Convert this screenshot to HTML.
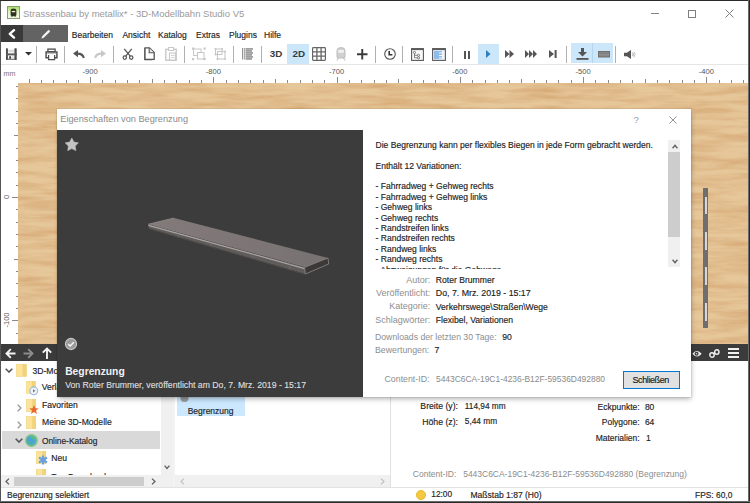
<!DOCTYPE html>
<html><head><meta charset="utf-8"><style>
html,body{margin:0;padding:0;}
body{width:750px;height:503px;position:relative;overflow:hidden;background:#fff;font-family:"Liberation Sans",sans-serif;}
.r{position:absolute;display:block;}
.t{position:absolute;white-space:pre;-webkit-text-stroke:0.15px currentColor;}
</style></head><body>
<div class="r" style="left:0px;top:0px;width:750px;height:503px;background:#ffffff;"></div>
<svg class="r" style="left:7px;top:6px;" width="13" height="13" viewBox="0 0 13 13"><defs><linearGradient id="lg" x1="0" y1="0" x2="0" y2="1"><stop offset="0" stop-color="#9edb58"/><stop offset="0.45" stop-color="#e2f4c4"/><stop offset="1" stop-color="#f6fbea"/></linearGradient></defs><rect x="0.5" y="0.5" width="12" height="12" fill="url(#lg)" stroke="#8c9c74" stroke-width="1"/><path d="M3.6 4.8 Q3.6 2.6 6.5 2.6 Q9.4 2.6 9.4 4.8 V9.2 L8.3 10.3 H4.7 L3.6 9.2 Z" fill="#2e3322"/><path d="M4.6 5.2 Q6.5 4.2 8.4 5.2 V5.9 Q6.5 6.6 4.6 5.9 Z" fill="#f2efd0"/><path d="M4.2 11.2 L5.2 10.1 M8.8 11.2 L7.8 10.1" stroke="#3a3f2c" stroke-width="0.9"/></svg>
<div class="t" style="left:23px;top:7.81px;font-size:9.5px;line-height:11.4px;color:#9a9a9a;-webkit-text-stroke:0;">Strassenbau by metallix* - 3D-Modellbahn Studio V5</div>
<div class="r" style="left:651px;top:12.5px;width:8px;height:1px;background:#808080;"></div>
<div class="r" style="left:688px;top:9.5px;width:8px;height:8px;background:none;border:1px solid #808080;box-sizing:border-box;"></div>
<svg class="r" style="left:725px;top:9px;" width="9" height="9" viewBox="0 0 9 9"><path d="M0.5 0.5 L8.5 8.5 M8.5 0.5 L0.5 8.5" stroke="#808080" stroke-width="1"/></svg>
<div class="r" style="left:1px;top:25px;width:22px;height:17px;background:#3a3a3a;"></div>
<div class="r" style="left:23px;top:25px;width:45px;height:17px;background:#636363;"></div>
<svg class="r" style="left:7.5px;top:29px;" width="8" height="10" viewBox="0 0 8 10"><path d="M6 1.2 L1.8 4.8 L6 8.6" stroke="#fff" stroke-width="2.4" fill="none" stroke-linejoin="round" stroke-linecap="round"/></svg>
<svg class="r" style="left:40px;top:28px;" width="12" height="12" viewBox="0 0 12 12"><path d="M1.8 10.2 L2.4 8 L8.6 1.8 L10.2 3.4 L4 9.6 Z" fill="#f4f4f4"/><path d="M1.4 10.6 L2.2 8.2 L3.8 9.8 Z" fill="#f4f4f4"/></svg>
<div class="t" style="left:71.8px;top:29.55px;font-size:8.5px;line-height:10.2px;color:#1e1e1e;">Bearbeiten</div>
<div class="t" style="left:122.4px;top:29.55px;font-size:8.5px;line-height:10.2px;color:#1e1e1e;">Ansicht</div>
<div class="t" style="left:158px;top:29.55px;font-size:8.5px;line-height:10.2px;color:#1e1e1e;">Katalog</div>
<div class="t" style="left:196px;top:29.55px;font-size:8.5px;line-height:10.2px;color:#1e1e1e;">Extras</div>
<div class="t" style="left:229px;top:29.55px;font-size:8.5px;line-height:10.2px;color:#1e1e1e;">Plugins</div>
<div class="t" style="left:264px;top:29.55px;font-size:8.5px;line-height:10.2px;color:#1e1e1e;">Hilfe</div>
<div class="r" style="left:1px;top:64px;width:747px;height:1px;background:#e6e6e6;"></div>
<svg class="r" style="left:6px;top:48px;" width="11" height="12" viewBox="0 0 11 12"><rect x="0" y="0.3" width="1.9" height="11.4" rx="0.6" fill="#4a4a4a"/><rect x="8.4" y="0.3" width="2.3" height="11.4" rx="0.6" fill="#4a4a4a"/><rect x="2.4" y="1.8" width="5.6" height="0.8" fill="#c4c4c4"/><rect x="2.4" y="3.4" width="5.6" height="0.8" fill="#c4c4c4"/><rect x="0" y="5.4" width="10.7" height="2" fill="#5a5a5a"/><rect x="0" y="10.7" width="10.7" height="1" fill="#4a4a4a"/><rect x="3.2" y="8.3" width="1.8" height="2.3" fill="#3a3a3a"/><rect x="5.5" y="8.3" width="2.4" height="2.5" fill="#dcdcdc"/></svg>
<svg class="r" style="left:25px;top:52px;" width="7" height="4" viewBox="0 0 7 4"><path d="M0 0 H7 L3.5 3.5 Z" fill="#333"/></svg>
<div class="r" style="left:36px;top:45.5px;width:1px;height:17px;background:#b0b0b0;"></div>
<div class="r" style="left:64px;top:45.5px;width:1px;height:17px;background:#b0b0b0;"></div>
<div class="r" style="left:113px;top:45.5px;width:1px;height:17px;background:#b0b0b0;"></div>
<div class="r" style="left:184px;top:45.5px;width:1px;height:17px;background:#b0b0b0;"></div>
<div class="r" style="left:233px;top:45.5px;width:1px;height:17px;background:#b0b0b0;"></div>
<div class="r" style="left:261px;top:45.5px;width:1px;height:17px;background:#b0b0b0;"></div>
<div class="r" style="left:375px;top:45.5px;width:1px;height:17px;background:#b0b0b0;"></div>
<div class="r" style="left:402px;top:45.5px;width:1px;height:17px;background:#b0b0b0;"></div>
<div class="r" style="left:452px;top:45.5px;width:1px;height:17px;background:#b0b0b0;"></div>
<div class="r" style="left:566px;top:45.5px;width:1px;height:17px;background:#b0b0b0;"></div>
<div class="r" style="left:615px;top:45.5px;width:1px;height:17px;background:#b0b0b0;"></div>
<svg class="r" style="left:44.5px;top:47.5px;" width="13" height="13" viewBox="0 0 13 13"><rect x="2.9" y="1.1" width="7.2" height="2.6" fill="none" stroke="#4e4e4e" stroke-width="1.3"/><path d="M3.2 9.8 H1.1 V4 H11.9 V9.8 H9.8" fill="none" stroke="#4e4e4e" stroke-width="1.5"/><rect x="1.8" y="4.8" width="9.4" height="1.2" fill="#bdbdbd"/><path d="M3.6 7 V11.6 H9.6 V7" fill="#fff" stroke="#4e4e4e" stroke-width="1.2"/></svg>
<svg class="r" style="left:73px;top:50px;" width="12" height="9" viewBox="0 0 12 9"><path d="M10.8 8 Q10 3.6 4.5 3.6" fill="none" stroke="#555" stroke-width="2.1"/><path d="M0 3.6 L5 0 V7.2 Z" fill="#555"/></svg>
<svg class="r" style="left:94px;top:50px;" width="12" height="9" viewBox="0 0 12 9"><path d="M1.2 8 Q2 3.6 7.5 3.6" fill="none" stroke="#c8c8c8" stroke-width="2.1"/><path d="M12 3.6 L7 0 V7.2 Z" fill="#c8c8c8"/></svg>
<svg class="r" style="left:122px;top:48px;" width="12" height="12" viewBox="0 0 12 12"><path d="M2.2 0.8 L8.3 8.2 M9.8 0.8 L3.7 8.2" stroke="#555" stroke-width="1.3"/><circle cx="2.8" cy="9.6" r="1.7" fill="#fff" stroke="#555" stroke-width="1.2"/><circle cx="9.2" cy="9.6" r="1.7" fill="#fff" stroke="#555" stroke-width="1.2"/></svg>
<svg class="r" style="left:143px;top:47px;" width="12" height="14" viewBox="0 0 12 14"><path d="M1.8 1 V12.8 H9.5" fill="none" stroke="#555" stroke-width="1.1"/><path d="M2 0.8 H6.5 L11.2 5.5 V12.4 H2 Z" fill="#fff" stroke="#555" stroke-width="1.3"/><path d="M6.2 1 V5.8 H11" fill="#e8e8e8" stroke="#555" stroke-width="1.1"/></svg>
<svg class="r" style="left:165px;top:47px;" width="12" height="14" viewBox="0 0 12 14"><rect x="0.8" y="2.3" width="10.4" height="10.9" fill="none" stroke="#c8c8c8" stroke-width="1.4"/><rect x="3.5" y="0.5" width="5" height="3" fill="#fff" stroke="#c8c8c8" stroke-width="1"/><rect x="4.5" y="6" width="6" height="7" fill="#fff" stroke="#c8c8c8" stroke-width="1.1"/><path d="M6 8.5 H9.5 M6 10.5 H9.5" stroke="#c8c8c8" stroke-width="0.8"/></svg>
<svg class="r" style="left:192px;top:47px;" width="14" height="14" viewBox="0 0 14 14"><rect x="1.5" y="2" width="7.5" height="6.5" fill="none" stroke="#c8c8c8" stroke-width="1"/><rect x="5.5" y="5.5" width="6.5" height="6.5" fill="#fff" stroke="#c8c8c8" stroke-width="1.1"/><rect x="0" y="0.5" width="2.2" height="2.2" fill="#c8c8c8"/><rect x="11.5" y="0.5" width="2.2" height="2.2" fill="#c8c8c8"/><rect x="0" y="11" width="2.2" height="2.2" fill="#c8c8c8"/><rect x="11.5" y="11" width="2.2" height="2.2" fill="#c8c8c8"/></svg>
<svg class="r" style="left:214px;top:47px;" width="13" height="14" viewBox="0 0 13 14"><rect x="1.5" y="2" width="6.5" height="5.5" fill="none" stroke="#c8c8c8" stroke-width="1"/><rect x="3.5" y="4.5" width="7.5" height="7.5" fill="none" stroke="#c8c8c8" stroke-width="1.1"/><circle cx="1.5" cy="2" r="1.1" fill="#c8c8c8"/><circle cx="8" cy="2" r="1.1" fill="#c8c8c8"/><circle cx="3.5" cy="12" r="1.1" fill="#c8c8c8"/><circle cx="11" cy="12" r="1.1" fill="#c8c8c8"/><circle cx="11" cy="4.5" r="1.1" fill="#c8c8c8"/><circle cx="1.5" cy="7.5" r="1.1" fill="#c8c8c8"/></svg>
<svg class="r" style="left:242px;top:48px;" width="11" height="12" viewBox="0 0 11 12"><rect x="0" y="0" width="0.9" height="11.5" fill="#888"/><rect x="1.8" y="0" width="0.9" height="11.5" fill="#888"/><rect x="3.5" y="0.3" width="7.5" height="1.3" fill="#7a7a7a"/><rect x="3.5" y="2.3" width="6.5" height="1.3" fill="#7a7a7a"/><rect x="3.5" y="4.3" width="7.5" height="1.3" fill="#7a7a7a"/><rect x="3.5" y="6.3" width="6.5" height="1.3" fill="#7a7a7a"/><rect x="3.5" y="8.3" width="7.5" height="1.3" fill="#7a7a7a"/><rect x="3.5" y="10.3" width="6.5" height="1.3" fill="#7a7a7a"/></svg>
<div class="t" style="left:269.8px;top:47.92px;font-size:9.8px;line-height:11.76px;color:#3a3a3a;font-weight:bold;-webkit-text-stroke:0;">3D</div>
<div class="r" style="left:287px;top:43.5px;width:21.5px;height:20px;background:#cce6fa;"></div>
<div class="t" style="left:292.5px;top:47.92px;font-size:9.8px;line-height:11.76px;color:#2e3e4e;font-weight:bold;-webkit-text-stroke:0;">2D</div>
<svg class="r" style="left:312px;top:47px;" width="14" height="14" viewBox="0 0 14 14"><rect x="0.6" y="0.6" width="12.8" height="12.8" rx="0.8" fill="none" stroke="#666" stroke-width="1.2"/><path d="M4.9 0.6 V13.4 M9.1 0.6 V13.4 M0.6 4.9 H13.4 M0.6 9.1 H13.4" stroke="#666" stroke-width="1.3"/></svg>
<svg class="r" style="left:336px;top:47px;" width="10" height="14" viewBox="0 0 10 14"><path d="M1 3.5 Q1 0.6 5 0.6 Q9 0.6 9 3.5 V10 Q9 11 8 11 H2 Q1 11 1 10 Z" fill="#d0d0d0" stroke="#bdbdbd" stroke-width="1"/><rect x="2.2" y="3" width="5.6" height="2.8" fill="#f2f2f2"/><path d="M2.5 11 L0.8 13.5 M7.5 11 L9.2 13.5" stroke="#c4c4c4" stroke-width="1.1"/></svg>
<svg class="r" style="left:357px;top:49px;" width="10.5" height="10.5" viewBox="0 0 10.5 10.5"><path d="M5.25 0 V10.5 M0 5.25 H10.5" stroke="#3a3a3a" stroke-width="1.9"/></svg>
<svg class="r" style="left:384px;top:48px;" width="12" height="12" viewBox="0 0 12 12"><circle cx="6" cy="6" r="5.3" fill="none" stroke="#555" stroke-width="1.1"/><path d="M5.2 3 V6.8 H8.4" fill="none" stroke="#333" stroke-width="1.6"/></svg>
<svg class="r" style="left:411px;top:48px;" width="13" height="13" viewBox="0 0 13 13"><rect x="0.6" y="0.6" width="11.8" height="11.8" fill="#fafafa" stroke="#5a5a5a" stroke-width="1.1"/><rect x="0.6" y="0.6" width="11.8" height="1.5" fill="#5a5a5a"/><circle cx="3.5" cy="4.5" r="1.1" fill="none" stroke="#666" stroke-width="0.8"/><path d="M3.5 5.6 V9.8 H6.5 M3.5 7.3 H6.5" fill="none" stroke="#666" stroke-width="0.8"/><circle cx="7.5" cy="7.3" r="1.1" fill="none" stroke="#666" stroke-width="0.8"/><circle cx="7.5" cy="9.8" r="1.1" fill="none" stroke="#666" stroke-width="0.8"/></svg>
<svg class="r" style="left:432px;top:48px;" width="14" height="13" viewBox="0 0 14 13"><rect x="0.6" y="0.6" width="12.8" height="11.8" fill="#eaf3fb" stroke="#5a5a5a" stroke-width="1.1"/><rect x="0.6" y="0.6" width="12.8" height="1.5" fill="#5a5a5a"/><rect x="2" y="3" width="8" height="8" fill="#8fbde8"/><rect x="7" y="4.5" width="4" height="0.9" fill="#fff"/><rect x="7" y="7" width="4" height="0.9" fill="#fff"/><rect x="7" y="9.5" width="4" height="0.9" fill="#fff"/></svg>
<div class="r" style="left:463.5px;top:50.5px;width:2px;height:8px;background:#555;"></div>
<div class="r" style="left:468px;top:50.5px;width:2px;height:8px;background:#555;"></div>
<div class="r" style="left:478px;top:43.5px;width:21px;height:20px;background:#cce6fa;"></div>
<svg class="r" style="left:486px;top:50px;" width="5" height="8" viewBox="0 0 5 8"><path d="M0 0 L4.5 4 L0 8 Z" fill="#2f7fc0"/></svg>
<svg class="r" style="left:505px;top:50px;" width="10" height="8" viewBox="0 0 10 8"><path d="M0 0 L4.5 4 L0 8 Z M4.5 0 L9 4 L4.5 8 Z" fill="#555"/></svg>
<svg class="r" style="left:525px;top:50px;" width="12" height="8" viewBox="0 0 12 8"><path d="M0 0 L4 4 L0 8 Z M4 0 L8 4 L4 8 Z M8 0 L12 4 L8 8 Z" fill="#555"/></svg>
<svg class="r" style="left:549px;top:50px;" width="8" height="8" viewBox="0 0 8 8"><path d="M0 0 L5 4 L0 8 Z" fill="#555"/><rect x="5.6" y="0" width="2" height="8" fill="#555"/></svg>
<div class="r" style="left:571px;top:43px;width:42px;height:20px;background:#cce6fa;"></div>
<div class="r" style="left:592px;top:43px;width:1px;height:20px;background:#b3d3ee;"></div>
<svg class="r" style="left:576px;top:48px;" width="13" height="12" viewBox="0 0 13 12"><path d="M5 0 H8 V4 H11 L6.5 8.5 L2 4 H5 Z" fill="#555"/><rect x="0.5" y="10" width="12" height="1.8" fill="#555"/></svg>
<svg class="r" style="left:597.5px;top:51px;" width="12" height="6.5" viewBox="0 0 12 6.5"><rect x="0" y="0" width="12" height="6.5" fill="#6e6e6e"/><rect x="0.8" y="1.4" width="10.4" height="0.9" fill="#9a9a9a"/><rect x="0.8" y="2.9" width="10.4" height="0.9" fill="#9a9a9a"/><rect x="0.8" y="4.4" width="10.4" height="0.9" fill="#9a9a9a"/></svg>
<svg class="r" style="left:624px;top:50px;" width="12" height="9" viewBox="0 0 12 9"><path d="M0 2.8 H2.8 L7 0 V9 L2.8 6.2 H0 Z" fill="#555"/><path d="M8.6 2.8 Q10 4.5 8.6 6.2" fill="none" stroke="#888" stroke-width="0.9"/><path d="M10 1.6 Q12 4.5 10 7.4" fill="none" stroke="#b0b0b0" stroke-width="0.8"/></svg>
<div class="t" style="left:3.5px;top:70.49px;font-size:7.2px;line-height:8.64px;color:#777;-webkit-text-stroke:0;">mm</div>
<div class="r" style="left:28.5px;top:78.5px;width:1px;height:4px;background:#8a8a8a;"></div>
<div class="r" style="left:40.8px;top:80.0px;width:1px;height:2.5px;background:#8a8a8a;"></div>
<div class="r" style="left:53.1px;top:80.0px;width:1px;height:2.5px;background:#8a8a8a;"></div>
<div class="r" style="left:65.5px;top:80.0px;width:1px;height:2.5px;background:#8a8a8a;"></div>
<div class="r" style="left:77.8px;top:80.0px;width:1px;height:2.5px;background:#8a8a8a;"></div>
<div class="r" style="left:90.1px;top:76.5px;width:1px;height:6px;background:#8a8a8a;"></div>
<div class="r" style="left:102.4px;top:80.0px;width:1px;height:2.5px;background:#8a8a8a;"></div>
<div class="r" style="left:114.7px;top:80.0px;width:1px;height:2.5px;background:#8a8a8a;"></div>
<div class="r" style="left:127.1px;top:80.0px;width:1px;height:2.5px;background:#8a8a8a;"></div>
<div class="r" style="left:139.4px;top:80.0px;width:1px;height:2.5px;background:#8a8a8a;"></div>
<div class="r" style="left:151.7px;top:78.5px;width:1px;height:4px;background:#8a8a8a;"></div>
<div class="r" style="left:164.0px;top:80.0px;width:1px;height:2.5px;background:#8a8a8a;"></div>
<div class="r" style="left:176.4px;top:80.0px;width:1px;height:2.5px;background:#8a8a8a;"></div>
<div class="r" style="left:188.7px;top:80.0px;width:1px;height:2.5px;background:#8a8a8a;"></div>
<div class="r" style="left:201.0px;top:80.0px;width:1px;height:2.5px;background:#8a8a8a;"></div>
<div class="r" style="left:213.3px;top:76.5px;width:1px;height:6px;background:#8a8a8a;"></div>
<div class="r" style="left:225.7px;top:80.0px;width:1px;height:2.5px;background:#8a8a8a;"></div>
<div class="r" style="left:238.0px;top:80.0px;width:1px;height:2.5px;background:#8a8a8a;"></div>
<div class="r" style="left:250.3px;top:80.0px;width:1px;height:2.5px;background:#8a8a8a;"></div>
<div class="r" style="left:262.6px;top:80.0px;width:1px;height:2.5px;background:#8a8a8a;"></div>
<div class="r" style="left:275.0px;top:78.5px;width:1px;height:4px;background:#8a8a8a;"></div>
<div class="r" style="left:287.3px;top:80.0px;width:1px;height:2.5px;background:#8a8a8a;"></div>
<div class="r" style="left:299.6px;top:80.0px;width:1px;height:2.5px;background:#8a8a8a;"></div>
<div class="r" style="left:311.9px;top:80.0px;width:1px;height:2.5px;background:#8a8a8a;"></div>
<div class="r" style="left:324.3px;top:80.0px;width:1px;height:2.5px;background:#8a8a8a;"></div>
<div class="r" style="left:336.6px;top:76.5px;width:1px;height:6px;background:#8a8a8a;"></div>
<div class="r" style="left:348.9px;top:80.0px;width:1px;height:2.5px;background:#8a8a8a;"></div>
<div class="r" style="left:361.2px;top:80.0px;width:1px;height:2.5px;background:#8a8a8a;"></div>
<div class="r" style="left:373.6px;top:80.0px;width:1px;height:2.5px;background:#8a8a8a;"></div>
<div class="r" style="left:385.9px;top:80.0px;width:1px;height:2.5px;background:#8a8a8a;"></div>
<div class="r" style="left:398.2px;top:78.5px;width:1px;height:4px;background:#8a8a8a;"></div>
<div class="r" style="left:410.5px;top:80.0px;width:1px;height:2.5px;background:#8a8a8a;"></div>
<div class="r" style="left:422.8px;top:80.0px;width:1px;height:2.5px;background:#8a8a8a;"></div>
<div class="r" style="left:435.2px;top:80.0px;width:1px;height:2.5px;background:#8a8a8a;"></div>
<div class="r" style="left:447.5px;top:80.0px;width:1px;height:2.5px;background:#8a8a8a;"></div>
<div class="r" style="left:459.8px;top:76.5px;width:1px;height:6px;background:#8a8a8a;"></div>
<div class="r" style="left:472.1px;top:80.0px;width:1px;height:2.5px;background:#8a8a8a;"></div>
<div class="r" style="left:484.5px;top:80.0px;width:1px;height:2.5px;background:#8a8a8a;"></div>
<div class="r" style="left:496.8px;top:80.0px;width:1px;height:2.5px;background:#8a8a8a;"></div>
<div class="r" style="left:509.1px;top:80.0px;width:1px;height:2.5px;background:#8a8a8a;"></div>
<div class="r" style="left:521.4px;top:78.5px;width:1px;height:4px;background:#8a8a8a;"></div>
<div class="r" style="left:533.8px;top:80.0px;width:1px;height:2.5px;background:#8a8a8a;"></div>
<div class="r" style="left:546.1px;top:80.0px;width:1px;height:2.5px;background:#8a8a8a;"></div>
<div class="r" style="left:558.4px;top:80.0px;width:1px;height:2.5px;background:#8a8a8a;"></div>
<div class="r" style="left:570.7px;top:80.0px;width:1px;height:2.5px;background:#8a8a8a;"></div>
<div class="r" style="left:583.1px;top:76.5px;width:1px;height:6px;background:#8a8a8a;"></div>
<div class="r" style="left:595.4px;top:80.0px;width:1px;height:2.5px;background:#8a8a8a;"></div>
<div class="r" style="left:607.7px;top:80.0px;width:1px;height:2.5px;background:#8a8a8a;"></div>
<div class="r" style="left:620.0px;top:80.0px;width:1px;height:2.5px;background:#8a8a8a;"></div>
<div class="r" style="left:632.4px;top:80.0px;width:1px;height:2.5px;background:#8a8a8a;"></div>
<div class="r" style="left:644.7px;top:78.5px;width:1px;height:4px;background:#8a8a8a;"></div>
<div class="r" style="left:657.0px;top:80.0px;width:1px;height:2.5px;background:#8a8a8a;"></div>
<div class="r" style="left:669.3px;top:80.0px;width:1px;height:2.5px;background:#8a8a8a;"></div>
<div class="r" style="left:681.7px;top:80.0px;width:1px;height:2.5px;background:#8a8a8a;"></div>
<div class="r" style="left:694.0px;top:80.0px;width:1px;height:2.5px;background:#8a8a8a;"></div>
<div class="r" style="left:706.3px;top:76.5px;width:1px;height:6px;background:#8a8a8a;"></div>
<div class="r" style="left:718.6px;top:80.0px;width:1px;height:2.5px;background:#8a8a8a;"></div>
<div class="r" style="left:730.9px;top:80.0px;width:1px;height:2.5px;background:#8a8a8a;"></div>
<div class="r" style="left:743.3px;top:80.0px;width:1px;height:2.5px;background:#8a8a8a;"></div>
<div class="t" style="left:75.1px;top:67.6px;width:30px;text-align:center;font-size:7.6px;line-height:8px;color:#555;-webkit-text-stroke:0">-900</div>
<div class="t" style="left:198.3px;top:67.6px;width:30px;text-align:center;font-size:7.6px;line-height:8px;color:#555;-webkit-text-stroke:0">-800</div>
<div class="t" style="left:321.6px;top:67.6px;width:30px;text-align:center;font-size:7.6px;line-height:8px;color:#555;-webkit-text-stroke:0">-700</div>
<div class="t" style="left:444.8px;top:67.6px;width:30px;text-align:center;font-size:7.6px;line-height:8px;color:#555;-webkit-text-stroke:0">-600</div>
<div class="t" style="left:568.1px;top:67.6px;width:30px;text-align:center;font-size:7.6px;line-height:8px;color:#555;-webkit-text-stroke:0">-500</div>
<div class="t" style="left:691.3px;top:67.6px;width:30px;text-align:center;font-size:7.6px;line-height:8px;color:#555;-webkit-text-stroke:0">-400</div>
<div class="r" style="left:15.5px;top:86.1px;width:2.5px;height:1px;background:#8a8a8a;"></div>
<div class="r" style="left:15.5px;top:98.4px;width:2.5px;height:1px;background:#8a8a8a;"></div>
<div class="r" style="left:15.5px;top:110.7px;width:2.5px;height:1px;background:#8a8a8a;"></div>
<div class="r" style="left:15.5px;top:123.1px;width:2.5px;height:1px;background:#8a8a8a;"></div>
<div class="r" style="left:14px;top:135.4px;width:4px;height:1px;background:#8a8a8a;"></div>
<div class="r" style="left:15.5px;top:147.7px;width:2.5px;height:1px;background:#8a8a8a;"></div>
<div class="r" style="left:15.5px;top:160.0px;width:2.5px;height:1px;background:#8a8a8a;"></div>
<div class="r" style="left:15.5px;top:172.4px;width:2.5px;height:1px;background:#8a8a8a;"></div>
<div class="r" style="left:15.5px;top:184.7px;width:2.5px;height:1px;background:#8a8a8a;"></div>
<div class="r" style="left:12px;top:197.0px;width:6px;height:1px;background:#8a8a8a;"></div>
<div class="r" style="left:15.5px;top:209.3px;width:2.5px;height:1px;background:#8a8a8a;"></div>
<div class="r" style="left:15.5px;top:221.6px;width:2.5px;height:1px;background:#8a8a8a;"></div>
<div class="r" style="left:15.5px;top:234.0px;width:2.5px;height:1px;background:#8a8a8a;"></div>
<div class="r" style="left:15.5px;top:246.3px;width:2.5px;height:1px;background:#8a8a8a;"></div>
<div class="r" style="left:14px;top:258.6px;width:4px;height:1px;background:#8a8a8a;"></div>
<div class="r" style="left:15.5px;top:270.9px;width:2.5px;height:1px;background:#8a8a8a;"></div>
<div class="r" style="left:15.5px;top:283.3px;width:2.5px;height:1px;background:#8a8a8a;"></div>
<div class="r" style="left:15.5px;top:295.6px;width:2.5px;height:1px;background:#8a8a8a;"></div>
<div class="r" style="left:15.5px;top:307.9px;width:2.5px;height:1px;background:#8a8a8a;"></div>
<div class="r" style="left:12px;top:320.2px;width:6px;height:1px;background:#8a8a8a;"></div>
<div class="r" style="left:15.5px;top:332.6px;width:2.5px;height:1px;background:#8a8a8a;"></div>
<div class="t" style="left:-5px;top:193.0px;width:24px;text-align:center;font-size:7.5px;line-height:8px;color:#555;transform:rotate(-90deg);-webkit-text-stroke:0">0</div>
<div class="t" style="left:-5px;top:316.2px;width:24px;text-align:center;font-size:7.5px;line-height:8px;color:#555;transform:rotate(-90deg);-webkit-text-stroke:0">-100</div>
<div class="r" style="left:0px;top:0px;width:1px;height:503px;background:#555;"></div>
<svg class="r" style="left:18px;top:83px;" width="730" height="261" viewBox="0 0 730 261"><defs><filter id="wood" x="0" y="0" width="100%" height="100%" filterUnits="userSpaceOnUse">
<feTurbulence type="fractalNoise" baseFrequency="0.02 0.16" numOctaves="5" seed="7" result="n"/>
<feColorMatrix in="n" type="matrix" values="0 0 0 0 0  0 0 0 0 0  0 0 0 0 0  1.5 0 0 0 -0.5" result="a"/>
<feFlood flood-color="#d4a26c" result="c"/>
<feComposite in="c" in2="a" operator="in" result="s"/>
<feFlood flood-color="#e6c79a" result="base"/>
<feMerge><feMergeNode in="base"/><feMergeNode in="s"/></feMerge>
</filter></defs><rect x="0" y="0" width="730" height="261" filter="url(#wood)"/></svg>
<div class="r" style="left:702.7px;top:188px;width:5.1px;height:140px;background:#6e6e6e;"></div>
<div class="r" style="left:704.5px;top:196.7px;width:2.2px;height:17.5px;background:#d6d6d6;"></div>
<div class="r" style="left:704.5px;top:231.7px;width:2.2px;height:18.30000000000001px;background:#d6d6d6;"></div>
<div class="r" style="left:704.5px;top:266.9px;width:2.2px;height:18.30000000000001px;background:#d6d6d6;"></div>
<div class="r" style="left:704.5px;top:302.7px;width:2.2px;height:18.30000000000001px;background:#d6d6d6;"></div>
<div class="r" style="left:1px;top:344px;width:747px;height:17px;background:#3b3b3b;"></div>
<svg class="r" style="left:5px;top:347.5px;" width="11" height="11" viewBox="0 0 11 11"><path d="M10.5 5.5 H1.5 M5.8 1.2 L1.5 5.5 L5.8 9.8" stroke="#f4f4f4" stroke-width="1.9" fill="none"/></svg>
<svg class="r" style="left:23px;top:347.5px;" width="11" height="11" viewBox="0 0 11 11"><path d="M0.5 5.5 H9.5 M5.2 1.2 L9.5 5.5 L5.2 9.8" stroke="#8c8c8c" stroke-width="1.9" fill="none"/></svg>
<svg class="r" style="left:41.5px;top:347px;" width="10" height="12" viewBox="0 0 10 12"><path d="M5 12 V1.5 M0.8 5.7 L5 1.5 L9.2 5.7" stroke="#f4f4f4" stroke-width="1.9" fill="none"/></svg>
<svg class="r" style="left:691.5px;top:349.5px;" width="10" height="7.5" viewBox="0 0 10 7.5"><path d="M0.3 3.75 Q5 -1.6 9.7 3.75 Q5 9.1 0.3 3.75 Z" fill="#f2f2f2"/><circle cx="4.6" cy="3.75" r="2" fill="#3b3b3b"/><circle cx="4.6" cy="3.75" r="0.8" fill="#cfcfcf"/></svg>
<svg class="r" style="left:709px;top:349px;" width="11" height="9" viewBox="0 0 11 9"><circle cx="3" cy="6" r="2.2" fill="none" stroke="#f0f0f0" stroke-width="1.4"/><circle cx="7.8" cy="3" r="2.2" fill="none" stroke="#f0f0f0" stroke-width="1.4"/><path d="M4.5 4.8 L6.3 4" stroke="#f0f0f0" stroke-width="1.4"/></svg>
<div class="r" style="left:728px;top:348px;width:11px;height:1.8px;background:#f0f0f0;"></div>
<div class="r" style="left:728px;top:352px;width:11px;height:1.8px;background:#f0f0f0;"></div>
<div class="r" style="left:728px;top:356.2px;width:11px;height:1.8px;background:#f0f0f0;"></div>
<div class="r" style="left:1px;top:361px;width:172px;height:126px;background:#ffffff;"></div>
<svg class="r" style="left:5px;top:368.3px;" width="8" height="5" viewBox="0 0 8 5"><path d="M0.7 0.8 L4 4 L7.3 0.8" stroke="#555" stroke-width="1.6" fill="none"/></svg>
<svg class="r" style="left:16.2px;top:364.3px;" width="10.5" height="12.5" viewBox="0 0 10.5 12.5"><rect x="0" y="0" width="10.5" height="12.5" fill="#fbe39c"/><rect x="6.51" y="0" width="3.99" height="12.5" fill="#f2d27a"/><rect x="0" y="0" width="10.5" height="12.5" fill="none" stroke="#edd488" stroke-width="0.6"/></svg>
<div class="t" style="left:32.5px;top:366.36px;font-size:8.6px;line-height:10.32px;color:#222;">3D-Modelle</div>
<svg class="r" style="left:26.2px;top:381.3px;" width="9.5" height="12.5" viewBox="0 0 9.5 12.5"><rect x="0" y="0" width="9.5" height="12.5" fill="#fbe39c"/><rect x="5.89" y="0" width="3.61" height="12.5" fill="#f2d27a"/><rect x="0" y="0" width="9.5" height="12.5" fill="none" stroke="#edd488" stroke-width="0.6"/></svg>
<svg class="r" style="left:28.5px;top:385.7px;" width="10" height="10" viewBox="0 0 10 10"><circle cx="4.8" cy="4.8" r="3.9" fill="#eef3f8" stroke="#9bb8d6" stroke-width="1.1"/><path d="M4 3.2 L6.4 4.8 L4 6.4 Z" fill="#6a7a8a"/></svg>
<div class="t" style="left:41.7px;top:382.16px;font-size:8.6px;line-height:10.32px;color:#222;">Verlauf</div>
<svg class="r" style="left:16.5px;top:404px;" width="5" height="8" viewBox="0 0 5 8"><path d="M0.7 0.7 L4 4 L0.7 7.3" stroke="#999" stroke-width="1.3" fill="none"/></svg>
<svg class="r" style="left:26px;top:399px;" width="10" height="13" viewBox="0 0 10 13"><rect x="0" y="0" width="10" height="13" fill="#fbe39c"/><rect x="6.20" y="0" width="3.80" height="13" fill="#f2d27a"/><rect x="0" y="0" width="10" height="13" fill="none" stroke="#edd488" stroke-width="0.6"/></svg>
<svg class="r" style="left:29px;top:405px;" width="10" height="9" viewBox="0 0 10 9"><path d="M5 0 L6.3 3.3 L9.8 3.4 L7 5.6 L8 9 L5 7 L2 9 L3 5.6 L0.2 3.4 L3.7 3.3 Z" fill="#e8682a"/></svg>
<div class="t" style="left:42px;top:400.26px;font-size:8.6px;line-height:10.32px;color:#222;">Favoriten</div>
<svg class="r" style="left:16.5px;top:421px;" width="5" height="8" viewBox="0 0 5 8"><path d="M0.7 0.7 L4 4 L0.7 7.3" stroke="#999" stroke-width="1.3" fill="none"/></svg>
<svg class="r" style="left:26px;top:416px;" width="10" height="13" viewBox="0 0 10 13"><rect x="0" y="0" width="10" height="13" fill="#fbe39c"/><rect x="6.20" y="0" width="3.80" height="13" fill="#f2d27a"/><rect x="0" y="0" width="10" height="13" fill="none" stroke="#edd488" stroke-width="0.6"/></svg>
<div class="t" style="left:42px;top:417.16px;font-size:8.6px;line-height:10.32px;color:#222;">Meine 3D-Modelle</div>
<div class="r" style="left:2px;top:431.2px;width:158px;height:17.4px;background:#d9d9d9;"></div>
<svg class="r" style="left:14.5px;top:437.5px;" width="8" height="5" viewBox="0 0 8 5"><path d="M0.7 0.8 L4 4 L7.3 0.8" stroke="#555" stroke-width="1.6" fill="none"/></svg>
<svg class="r" style="left:25px;top:433.5px;" width="13" height="13" viewBox="0 0 13 13"><defs><radialGradient id="gl" cx="0.45" cy="0.5" r="0.6"><stop offset="0" stop-color="#4a9ee0"/><stop offset="0.55" stop-color="#4aa8c8"/><stop offset="1" stop-color="#8fd08a"/></radialGradient></defs><circle cx="6.5" cy="6.5" r="5.9" fill="url(#gl)" stroke="#86c878" stroke-width="1.1"/><path d="M6 2 Q9.5 2.5 10 5 Q8 5.5 7 4.5 Q5.5 5 6 2 Z" fill="#5cc070" opacity="0.9"/><path d="M3.5 7 Q5 6.5 6 8.5 Q5 10.5 3.8 9.8 Z" fill="#5cb86a" opacity="0.7"/></svg>
<div class="t" style="left:41.9px;top:436.05px;font-size:8.4px;line-height:10.08px;color:#222;">Online-Katalog</div>
<svg class="r" style="left:35.7px;top:451px;" width="10" height="13" viewBox="0 0 10 13"><rect x="0" y="0" width="10" height="13" fill="#fbe39c"/><rect x="6.20" y="0" width="3.80" height="13" fill="#f2d27a"/><rect x="0" y="0" width="10" height="13" fill="none" stroke="#edd488" stroke-width="0.6"/></svg>
<svg class="r" style="left:38px;top:455px;" width="10" height="10" viewBox="0 0 10 10"><path d="M5 0.5 V9.5 M1 2.5 L9 7.5 M9 2.5 L1 7.5" stroke="#6aa0e0" stroke-width="2.2"/></svg>
<div class="t" style="left:51.2px;top:452.86px;font-size:8.6px;line-height:10.32px;color:#222;">Neu</div>
<svg class="r" style="left:35.7px;top:469px;" width="10" height="6" viewBox="0 0 10 6"><rect x="0" y="0" width="10" height="6" fill="#fbe39c"/><rect x="6.20" y="0" width="3.80" height="6" fill="#f2d27a"/><rect x="0" y="0" width="10" height="6" fill="none" stroke="#edd488" stroke-width="0.6"/></svg>
<div class="t" style="left:51.2px;top:471.86px;font-size:8.6px;line-height:10.32px;color:#222;clip-path:inset(0 0 5px 0);">Top-Downloads</div>
<div class="r" style="left:161px;top:361px;width:12px;height:114px;background:#f0f0f0;"></div>
<svg class="r" style="left:164px;top:465px;" width="6" height="5" viewBox="0 0 6 5"><path d="M0.6 0.6 L3 3.4 L5.4 0.6" stroke="#606060" stroke-width="1.3" fill="none"/></svg>
<div class="r" style="left:1px;top:475px;width:172px;height:12px;background:#f0f0f0;"></div>
<div class="r" style="left:14px;top:476.5px;width:130px;height:9px;background:#cdcdcd;"></div>
<svg class="r" style="left:5px;top:478px;" width="5" height="7" viewBox="0 0 5 7"><path d="M4 0.6 L1 3.5 L4 6.4" stroke="#606060" stroke-width="1.3" fill="none"/></svg>
<svg class="r" style="left:151px;top:478px;" width="5" height="7" viewBox="0 0 5 7"><path d="M1 0.6 L4 3.5 L1 6.4" stroke="#606060" stroke-width="1.3" fill="none"/></svg>
<div class="r" style="left:173px;top:361px;width:2px;height:126px;background:#f3f3f3;"></div>
<div class="r" style="left:175px;top:361px;width:216px;height:114px;background:#ffffff;"></div>
<div class="r" style="left:177.3px;top:395px;width:67.7px;height:20.7px;background:#cce8ff;"></div>
<svg class="r" style="left:180px;top:396px;" width="9" height="6" viewBox="0 0 9 6"><circle cx="4.5" cy="2" r="4" fill="#9a9a9a"/></svg>
<div class="t" style="left:187.7px;top:405.95px;font-size:8.5px;line-height:10.2px;color:#222;">Begrenzung</div>
<div class="r" style="left:175px;top:475px;width:216px;height:12px;background:#f0f0f0;"></div>
<svg class="r" style="left:180px;top:477.5px;" width="5" height="7" viewBox="0 0 5 7"><path d="M4 0.6 L1 3.5 L4 6.4" stroke="#c0c0c0" stroke-width="1.2" fill="none"/></svg>
<svg class="r" style="left:380px;top:477.5px;" width="5" height="7" viewBox="0 0 5 7"><path d="M1 0.6 L4 3.5 L1 6.4" stroke="#c0c0c0" stroke-width="1.2" fill="none"/></svg>
<div class="r" style="left:390px;top:361px;width:1px;height:126px;background:#e0e0e0;"></div>
<div class="t" style="right:292px;top:401.47px;font-size:8.7px;line-height:10.44px;color:#222;">Breite (y):</div>
<div class="t" style="left:464.8px;top:401.84px;font-size:8.3px;line-height:9.96px;color:#222;">114,94 mm</div>
<div class="t" style="right:292px;top:416.97px;font-size:8.7px;line-height:10.44px;color:#222;">Höhe (z):</div>
<div class="t" style="left:464.8px;top:417.34px;font-size:8.3px;line-height:9.96px;color:#222;">5,44 mm</div>
<div class="t" style="right:110.39999999999998px;top:401.85px;font-size:8.5px;line-height:10.2px;color:#222;">Eckpunkte:</div>
<div class="t" style="left:644.9px;top:401.85px;font-size:8.5px;line-height:10.2px;color:#222;">80</div>
<div class="t" style="right:110.39999999999998px;top:416.95px;font-size:8.5px;line-height:10.2px;color:#222;">Polygone:</div>
<div class="t" style="left:644.9px;top:416.95px;font-size:8.5px;line-height:10.2px;color:#222;">64</div>
<div class="t" style="right:110.39999999999998px;top:432.55px;font-size:8.5px;line-height:10.2px;color:#222;">Materialien:</div>
<div class="t" style="left:646px;top:432.55px;font-size:8.5px;line-height:10.2px;color:#222;">1</div>
<div class="t" style="left:412.8px;top:468.55px;font-size:8.5px;line-height:10.2px;color:#8c8c8c;-webkit-text-stroke:0;">Content-ID:</div>
<div class="t" style="left:463.2px;top:468.59px;font-size:8.47px;line-height:10.16px;color:#8c8c8c;-webkit-text-stroke:0;">5443C6CA-19C1-4236-B12F-59536D492880 (Begrenzung)</div>
<div class="r" style="left:1px;top:486.5px;width:747px;height:1px;background:#e2e2e2;"></div>
<div class="t" style="left:7px;top:489.95px;font-size:8.5px;line-height:10.2px;color:#222;">Begrenzung selektiert</div>
<svg class="r" style="left:416px;top:489.5px;" width="10" height="10" viewBox="0 0 10 10"><circle cx="5" cy="5" r="4.6" fill="#f5c842" stroke="#e8b020" stroke-width="0.8"/></svg>
<div class="t" style="left:431.3px;top:490.34px;font-size:8.3px;line-height:9.96px;color:#222;">12:00</div>
<div class="t" style="left:470.4px;top:490.11px;font-size:8.55px;line-height:10.26px;color:#222;">Maßstab 1:87 (H0)</div>
<div class="t" style="right:17.700000000000045px;top:490.25px;font-size:8.4px;line-height:10.08px;color:#222;">FPS: 60,0</div>
<div class="r" style="left:0px;top:0px;width:750px;height:1px;background:#2a2a2a;"></div>
<div class="r" style="left:748px;top:0px;width:1px;height:503px;background:#6a6a6a;"></div>
<div class="r" style="left:749px;top:0px;width:1px;height:503px;background:#2a2a2a;"></div>
<div class="r" style="left:0px;top:501px;width:750px;height:1px;background:#6a6a6a;"></div>
<div class="r" style="left:0px;top:502px;width:750px;height:1px;background:#2a2a2a;"></div>
<div class="r" style="left:57px;top:109px;width:634px;height:288px;background:#fff;box-shadow:1px 3px 5px -1px rgba(0,0,0,0.30), 0 0 0 1px rgba(0,0,0,0.06);"></div>
<div class="t" style="left:60.3px;top:114.29px;font-size:9.2px;line-height:11.04px;color:#8a8a8a;-webkit-text-stroke:0;">Eigenschaften von Begrenzung</div>
<div class="t" style="left:633.6px;top:114.31px;font-size:9.6px;line-height:11.52px;color:#959595;-webkit-text-stroke:0;">?</div>
<svg class="r" style="left:668.5px;top:115.5px;" width="8" height="8" viewBox="0 0 8 8"><path d="M0.4 0.4 L7.6 7.6 M7.6 0.4 L0.4 7.6" stroke="#8a8a8a" stroke-width="0.9"/></svg>
<div class="r" style="left:57px;top:130px;width:306px;height:267px;background:#3c3c3c;"></div>
<svg class="r" style="left:64.8px;top:138px;" width="14" height="14" viewBox="0 0 14 14"><polygon points="6.80,0.10 8.92,4.09 13.36,4.87 10.22,8.11 10.86,12.58 6.80,10.60 2.74,12.58 3.38,8.11 0.24,4.87 4.68,4.09" fill="#c4c4c4" stroke="#c4c4c4" stroke-width="0.6" stroke-linejoin="round"/></svg>
<svg class="r" style="left:64.4px;top:337.2px;" width="14" height="14" viewBox="0 0 14 14"><circle cx="7" cy="7" r="5.6" fill="#9a9a9a" stroke="#c6c6c6" stroke-width="1.1"/><path d="M4.2 7.2 L6.2 9 L9.8 5.2" stroke="#f4f4f4" stroke-width="1.6" fill="none"/></svg>
<div class="t" style="left:65.2px;top:365.65px;font-size:10.3px;line-height:12.36px;color:#f2f2f2;font-weight:bold;-webkit-text-stroke:0;">Begrenzung</div>
<div class="t" style="left:65.2px;top:379.77px;font-size:8.7px;line-height:10.44px;color:#dcdcdc;">Von Roter Brummer, veröffentlicht am Do, 7. Mrz. 2019 - 15:17</div>
<svg class="r" style="left:140px;top:210px;" width="200" height="70" viewBox="0 0 200 70">
<defs><linearGradient id="topg" x1="0" y1="0" x2="1" y2="0"><stop offset="0" stop-color="#837b7a"/><stop offset="1" stop-color="#787171"/></linearGradient><filter id="spk" x="0" y="0" width="100%" height="100%"><feTurbulence type="fractalNoise" baseFrequency="0.9" numOctaves="2" seed="2"/><feColorMatrix type="matrix" values="0 0 0 0 0.2  0 0 0 0 0.2  0 0 0 0 0.2  0 0 0 1.2 -0.55"/><feComposite in2="SourceGraphic" operator="in"/></filter>
<filter id="bl" x="-5%" y="-20%" width="110%" height="140%"><feGaussianBlur stdDeviation="0.45"/></filter></defs>
<g filter="url(#bl)" transform="translate(-140,-210)">
<path d="M148 224.3 L174 218 L328 258 L304.7 267.3 Z" fill="url(#topg)"/><path d="M148 224.3 L174 218 L328 258 L304.7 267.3 Z" fill="#000" filter="url(#spk)" opacity="0.5"/>
<path d="M148 224.3 L304.7 267.3 L305.3 274 L149 228.5 Z" fill="#5f5b5a"/>
<path d="M148.5 225.3 L304.7 268.6" stroke="#a9a5a3" stroke-width="1.2"/>
<path d="M304.7 267.3 L328 258 L328.7 264 L305.3 274 Z" fill="#3a3736" stroke="#8e8a88" stroke-width="0.8"/>
<path d="M148 224.3 L174 218" stroke="#8f8b89" stroke-width="0.8"/>
<path d="M178 232 V238 M211 241 V247 M253 252 V258 M290 263 V270" stroke="#77726f" stroke-width="0.8"/>
<path d="M150 229 L304 274" stroke="#4e4a49" stroke-width="1"/>
</g>
</svg>
<div class="t" style="left:375.5px;top:139.71px;font-size:8.55px;line-height:10.26px;color:#222;">Die Begrenzung kann per flexibles Biegen in jede Form gebracht werden.</div>
<div class="t" style="left:375.5px;top:160.51px;font-size:8.55px;line-height:10.26px;color:#222;">Enthält 12 Variationen:</div>
<div class="t" style="left:375.5px;top:181.31px;font-size:8.55px;line-height:10.26px;color:#222;">- Fahrradweg + Gehweg rechts</div>
<div class="t" style="left:375.5px;top:191.71px;font-size:8.55px;line-height:10.26px;color:#222;">- Fahrradweg + Gehweg links</div>
<div class="t" style="left:375.5px;top:202.11px;font-size:8.55px;line-height:10.26px;color:#222;">- Gehweg links</div>
<div class="t" style="left:375.5px;top:212.51px;font-size:8.55px;line-height:10.26px;color:#222;">- Gehweg rechts</div>
<div class="t" style="left:375.5px;top:222.91px;font-size:8.55px;line-height:10.26px;color:#222;">- Randstreifen links</div>
<div class="t" style="left:375.5px;top:233.31px;font-size:8.55px;line-height:10.26px;color:#222;">- Randstreifen rechts</div>
<div class="t" style="left:375.5px;top:243.71px;font-size:8.55px;line-height:10.26px;color:#222;">- Randweg links</div>
<div class="t" style="left:375.5px;top:254.11px;font-size:8.55px;line-height:10.26px;color:#222;">- Randweg rechts</div>
<div class="t" style="left:375.5px;top:264.51px;font-size:8.55px;line-height:10.26px;color:#222;">- Abzweigungen für die Gehwege</div>
<div class="r" style="left:370px;top:268.5px;width:296px;height:8px;background:#fff;"></div>
<div class="r" style="left:668px;top:140px;width:12px;height:127px;background:#f0f0f0;"></div>
<div class="r" style="left:668px;top:152px;width:12px;height:85px;background:#cdcdcd;"></div>
<svg class="r" style="left:671.5px;top:143.5px;" width="6" height="5" viewBox="0 0 6 5"><path d="M0.6 4.2 L3 1.4 L5.4 4.2" stroke="#606060" stroke-width="1.4" fill="none"/></svg>
<svg class="r" style="left:671.5px;top:259px;" width="6" height="5" viewBox="0 0 6 5"><path d="M0.6 0.8 L3 3.6 L5.4 0.8" stroke="#606060" stroke-width="1.4" fill="none"/></svg>
<div class="t" style="right:319.7px;top:274.68px;font-size:9px;line-height:10.8px;color:#8e8e8e;-webkit-text-stroke:0;">Autor:</div>
<div class="t" style="left:435.8px;top:275.06px;font-size:8.6px;line-height:10.32px;color:#222;">Roter Brummer</div>
<div class="t" style="right:319.7px;top:287.88px;font-size:9px;line-height:10.8px;color:#8e8e8e;-webkit-text-stroke:0;">Veröffentlicht:</div>
<div class="t" style="left:435.8px;top:288.07px;font-size:8.8px;line-height:10.56px;color:#222;">Do, 7. Mrz. 2019 - 15:17</div>
<div class="t" style="right:319.7px;top:301.48px;font-size:9px;line-height:10.8px;color:#8e8e8e;-webkit-text-stroke:0;">Kategorie:</div>
<div class="t" style="left:435.8px;top:301.86px;font-size:8.6px;line-height:10.32px;color:#222;">Verkehrswege\Straßen\Wege</div>
<div class="t" style="right:319.7px;top:314.78px;font-size:9px;line-height:10.8px;color:#8e8e8e;-webkit-text-stroke:0;">Schlagwörter:</div>
<div class="t" style="left:435.8px;top:315.16px;font-size:8.6px;line-height:10.32px;color:#222;">Flexibel, Variationen</div>
<div class="t" style="left:375px;top:331.77px;font-size:8.7px;line-height:10.44px;color:#8e8e8e;-webkit-text-stroke:0;">Downloads der letzten 30 Tage:</div>
<div class="t" style="left:502.3px;top:331.86px;font-size:8.6px;line-height:10.32px;color:#222;">90</div>
<div class="t" style="left:375px;top:345.17px;font-size:8.8px;line-height:10.56px;color:#8e8e8e;-webkit-text-stroke:0;">Bewertungen:</div>
<div class="t" style="left:434.6px;top:345.36px;font-size:8.6px;line-height:10.32px;color:#222;">7</div>
<div class="t" style="left:384.5px;top:373.67px;font-size:8.8px;line-height:10.56px;color:#8e8e8e;-webkit-text-stroke:0;">Content-ID:</div>
<div class="t" style="left:436px;top:374.01px;font-size:8.44px;line-height:10.13px;color:#8a8a8a;-webkit-text-stroke:0;">5443C6CA-19C1-4236-B12F-59536D492880</div>
<div class="r" style="left:622.5px;top:370.5px;width:57.5px;height:18px;background:#e1e1e1;border:1.5px solid #0078d7;box-sizing:border-box;"></div>
<div class="t" style="left:632.5px;top:375.28px;font-size:9px;line-height:10.8px;color:#1a1a1a;letter-spacing:-0.4px;">Schließen</div>
</body></html>
